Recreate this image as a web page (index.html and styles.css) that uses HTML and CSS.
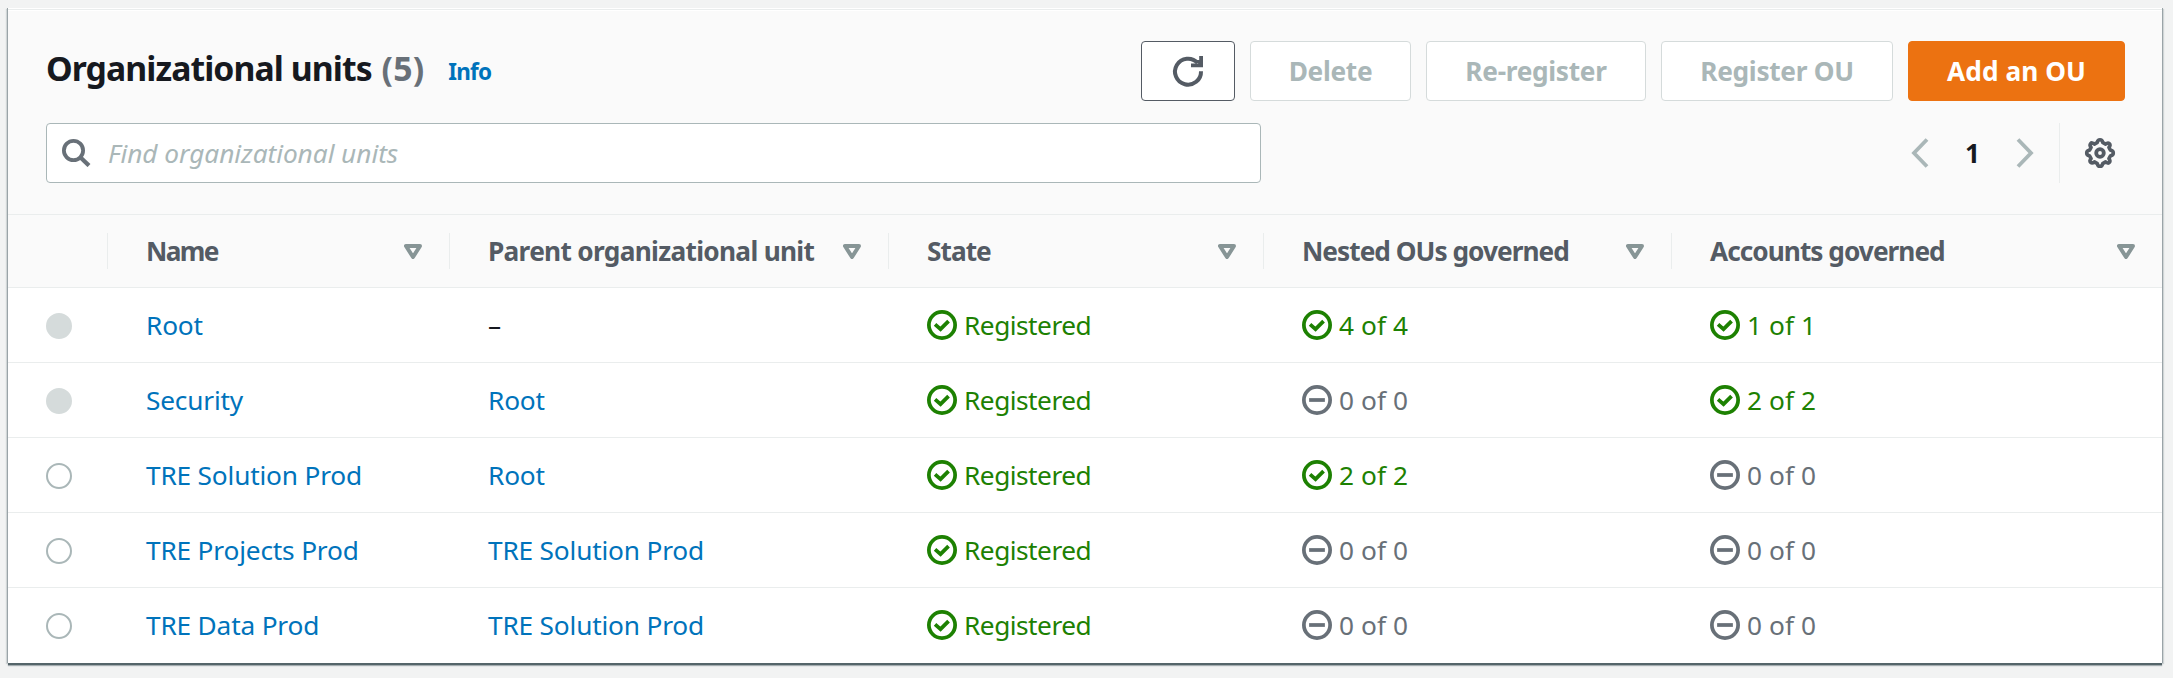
FILE: index.html
```html
<!DOCTYPE html>
<html lang="en">
<head>
<meta charset="utf-8">
<title>Organizational units</title>
<link rel="stylesheet" href="styles.css">
</head>
<body>
<svg class="sprite" aria-hidden="true">
  <symbol id="ok" viewBox="0 0 16 16"><circle cx="8" cy="8" r="7" fill="none" stroke="currentColor" stroke-width="2"/><path d="M4.300 7.700l2.900 2.500 4.300-4.300" fill="none" stroke="currentColor" stroke-width="2"/></symbol>
  <symbol id="none" viewBox="0 0 16 16"><circle cx="8" cy="8" r="7" fill="none" stroke="currentColor" stroke-width="2"/><path d="M3.800 8h8.400" stroke="currentColor" stroke-width="2"/></symbol>
  <symbol id="sort" viewBox="0 0 18 15"><path d="M2 2h14L9 13z" fill="none" stroke="currentColor" stroke-width="4" stroke-linejoin="round"/></symbol>
</svg>
<main class="card">
  <header class="toolbar">
    <div class="heading">
      <h1 class="title">Organizational units <span class="count">(5)</span></h1>
      <a class="info">Info</a>
      <div class="actions">
        <button class="btn btn-refresh" aria-label="Refresh"><svg class="icon" viewBox="0 0 30 30"><path d="M28 15.200A13 13 0 1 1 24.600 6.900" fill="none" stroke="currentColor" stroke-width="4"/><path d="M28.100 0v9.300H18" fill="none" stroke="currentColor" stroke-width="3.800"/><path d="M20 4l7 0v5z" fill="currentColor"/></svg></button>
        <button class="btn btn-delete">Delete</button>
        <button class="btn btn-reregister">Re-register</button>
        <button class="btn btn-register">Register OU</button>
        <button class="btn btn-primary">Add an OU</button>
      </div>
    </div>
    <div class="filters">
      <div class="search">
        <svg class="search-icon" viewBox="0 0 29 28"><circle cx="11.500" cy="11.500" r="9.600" fill="none" stroke="currentColor" stroke-width="3.800"/><path d="M18 18l9 8.600" stroke="currentColor" stroke-width="4.200"/></svg>
        <span class="placeholder">Find organizational units</span>
      </div>
      <nav class="pager">
        <svg class="chevron" viewBox="0 0 18 30"><path d="M16 1.500L3 15l13 13.500" fill="none" stroke="currentColor" stroke-width="3.800"/></svg>
        <span class="page">1</span>
        <svg class="chevron" viewBox="0 0 18 30"><path d="M2 1.500L15 15 2 28.500" fill="none" stroke="currentColor" stroke-width="3.800"/></svg>
      </nav>
      <div class="settings"><svg class="icon" viewBox="0 0 30 30"><path fill="none" stroke="currentColor" stroke-width="3.600" stroke-linejoin="round" d="M12.300 4.400Q12.800 1.700 15 1.700T17.700 4.400L18.500 4.900 20.600 6.100Q22.800 4.300 24.400 5.600T23.900 9.400L25.100 11.500 25.600 12.300Q28.300 12.800 28.300 15T25.600 17.700L25.100 18.500 23.900 20.600Q25.700 22.800 24.400 24.400T20.600 23.900L18.500 25.100 17.700 25.600Q17.200 28.300 15 28.300T12.300 25.600L11.500 25.100 9.400 23.900Q7.200 25.700 5.600 24.400T6.100 20.600L4.900 18.500 4.400 17.700Q1.700 17.200 1.700 15T4.400 12.300L4.900 11.500 6.100 9.400Q4.300 7.200 5.600 5.600T9.400 6.100L11.500 4.900z"/><circle cx="15" cy="15" r="3.800" fill="none" stroke="currentColor" stroke-width="3.800"/></svg></div>
    </div>
  </header>
  <table class="table">
    <colgroup><col class="c-select"><col class="c-name"><col class="c-parent"><col class="c-state"><col class="c-nested"><col class="c-accounts"></colgroup>
    <thead>
      <tr>
        <th></th>
        <th><div class="th"><span class="th-name">Name</span><svg class="sort"><use href="#sort"/></svg></div></th>
        <th><div class="th"><span class="th-parent">Parent organizational unit</span><svg class="sort"><use href="#sort"/></svg></div></th>
        <th><div class="th"><span>State</span><svg class="sort"><use href="#sort"/></svg></div></th>
        <th><div class="th"><span>Nested OUs governed</span><svg class="sort"><use href="#sort"/></svg></div></th>
        <th><div class="th"><span>Accounts governed</span><svg class="sort"><use href="#sort"/></svg></div></th>
      </tr>
    </thead>
    <tbody>
      <tr><td><span class="radio disabled"></span></td><td><a>Root</a></td><td>–</td>
        <td><span class="status ok reg"><svg><use href="#ok"/></svg>Registered</span></td>
        <td><span class="status ok"><svg><use href="#ok"/></svg>4 of 4</span></td>
        <td><span class="status ok"><svg><use href="#ok"/></svg>1 of 1</span></td></tr>
      <tr><td><span class="radio disabled"></span></td><td><a>Security</a></td><td><a>Root</a></td>
        <td><span class="status ok reg"><svg><use href="#ok"/></svg>Registered</span></td>
        <td><span class="status"><svg><use href="#none"/></svg>0 of 0</span></td>
        <td><span class="status ok"><svg><use href="#ok"/></svg>2 of 2</span></td></tr>
      <tr><td><span class="radio"></span></td><td><a>TRE Solution Prod</a></td><td><a>Root</a></td>
        <td><span class="status ok reg"><svg><use href="#ok"/></svg>Registered</span></td>
        <td><span class="status ok"><svg><use href="#ok"/></svg>2 of 2</span></td>
        <td><span class="status"><svg><use href="#none"/></svg>0 of 0</span></td></tr>
      <tr><td><span class="radio"></span></td><td><a>TRE Projects Prod</a></td><td><a>TRE Solution Prod</a></td>
        <td><span class="status ok reg"><svg><use href="#ok"/></svg>Registered</span></td>
        <td><span class="status"><svg><use href="#none"/></svg>0 of 0</span></td>
        <td><span class="status"><svg><use href="#none"/></svg>0 of 0</span></td></tr>
      <tr><td><span class="radio"></span></td><td><a>TRE Data Prod</a></td><td><a>TRE Solution Prod</a></td>
        <td><span class="status ok reg"><svg><use href="#ok"/></svg>Registered</span></td>
        <td><span class="status"><svg><use href="#none"/></svg>0 of 0</span></td>
        <td><span class="status"><svg><use href="#none"/></svg>0 of 0</span></td></tr>
    </tbody>
  </table>
</main>
</body>
</html>
```
FILE: styles.css
```css
* { box-sizing: border-box; }
body {
  margin: 0;
  height: 678px;
  padding: 8px 11px 15px 8px;
  overflow: hidden;
  background: #f2f3f3;
  color: #16191f;
  font: 26.25px/36px "Noto Sans", "Open Sans", sans-serif;
}
.sprite { display: none; }
.card {
  height: 655px;
  background: #fff;
  box-shadow: 0 2px 0 #55656a, 0 3px 1px #a4adb0, -1px 0 0 #98a3a6, 1px 0 0 #98a3a6, -2px 1px 1px #d0d5d6, 2px 1px 1px #d0d5d6;
}
.toolbar {
  height: 207px;
  padding: 31px 37px 0 38px;
  background: #fafafa;
  border-top: 1px solid #fff;
  border-bottom: 1px solid #eaeded;
  box-shadow: inset 0 1px 0 #eaeded, inset 0 2px 0 #fff;
}
.heading { display: flex; height: 62px; }
.title {
  margin: 0;
  padding: 7px 0 0 0;
  font-size: 33.75px;
  font-weight: 700;
  line-height: 42px;
  letter-spacing: -.93px;
  white-space: nowrap;
}
.count { margin-left: 2px; color: #687078; letter-spacing: .2px; }
.info {
  margin: 14px 0 0 24px;
  color: #0073bb;
  font-size: 22.5px;
  font-weight: 700;
  line-height: 36px;
  letter-spacing: -.8px;
}
.actions { display: flex; gap: 15px; margin-left: auto; padding-top: 1px; }
.btn {
  height: 60px;
  padding: 0 0 1px;
  border: 1px solid #d5dbdb;
  border-radius: 4px;
  background: #fff;
  color: #aab7b8;
  font: 700 26.25px/36px "Noto Sans", sans-serif;
  letter-spacing: -.3px;
  white-space: nowrap;
}
.btn-refresh { display: grid; place-items: center; width: 94px; padding: 0; border-color: #545b64; color: #545b64; }
.btn-delete { width: 161px; }
.btn-reregister { width: 220px; }
.btn-register { width: 232px; }
.btn-primary { width: 217px; border-color: #ec7211; background: #ec7211; color: #fff; letter-spacing: .05px; }
.icon { display: block; width: 30px; height: 30px; overflow: visible; }
.filters { display: flex; margin-top: 21px; }
.search {
  display: flex;
  align-items: center;
  width: 1215px;
  height: 60px;
  padding-left: 15px;
  border: 1px solid #aab7b8;
  border-radius: 4px;
  background: #fff;
}
.search-icon { width: 29px; height: 28px; color: #687078; }
.placeholder { padding: 0 0 0 17px; color: #aab7b8; font-style: italic; letter-spacing: -.05px; }
.pager { display: flex; align-items: center; margin-left: auto; padding-right: 25px; }
.chevron { width: 18px; height: 30px; color: #aab7b8; }
.page { width: 87px; font-weight: 700; text-align: center; }
.settings { display: flex; align-items: center; width: 66px; height: 60px; padding-left: 25px; border-left: 1px solid #eaeded; color: #545b64; }
.table { width: 100%; border-collapse: separate; border-spacing: 0; table-layout: fixed; }
.c-select { width: 99px; }
.c-name { width: 342px; }
.c-parent { width: 439px; }
.c-state { width: 375px; }
.c-nested { width: 408px; }
th, td { padding: 0; text-align: left; border-bottom: 1px solid #eaeded; }
th { height: 73px; background: #fafafa; color: #545b64; font-weight: 700; letter-spacing: -.98px; }
.th { display: flex; justify-content: space-between; align-items: center; height: 36px; padding: 0 27px 0 38px; border-left: 1px solid #eaeded; white-space: nowrap; }
.th span { padding-bottom: 1px; }
.th .th-name { letter-spacing: -1.6px; }
.th .th-parent { letter-spacing: -.7px; }
.sort { width: 18px; height: 15px; color: #879596; }
td { height: 75px; padding: 0 0 0 39px; letter-spacing: -.18px; white-space: nowrap; }
td:first-child { padding: 2px 0 0 38px; }
tbody tr:last-child td { border-bottom-color: transparent; }
td a { color: #0073bb; }
.radio { display: block; width: 26px; height: 26px; border: 2px solid #aab7b8; border-radius: 50%; background: #fff; }
.radio.disabled { border-color: #d5dbdb; background: #d5dbdb; }
.status { display: flex; align-items: center; gap: 7px; color: #687078; letter-spacing: .1px; }
.status svg { width: 30px; height: 30px; }
.status.ok { color: #1d8102; }
.status.reg { letter-spacing: -.5px; }
```
